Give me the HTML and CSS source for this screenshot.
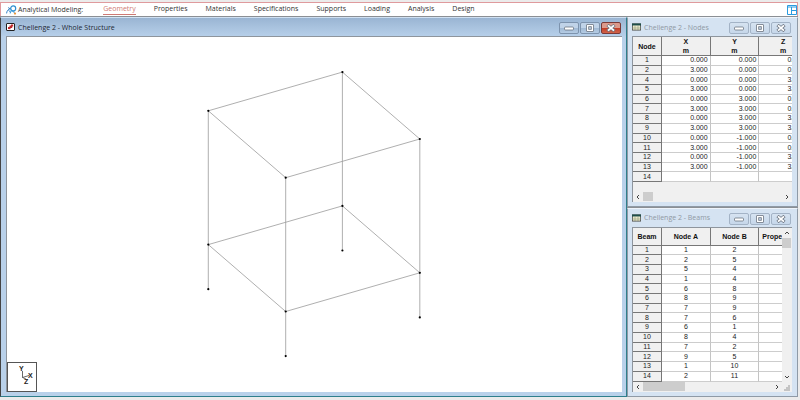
FILE: index.html
```html
<!DOCTYPE html>
<html lang="en">
<head>
    <meta charset="UTF-8">
    <meta name="viewport" content="width=device-width, initial-scale=1.0">
    <title>Analytical Modeling</title>
    <link rel="stylesheet" href="styles.css">
</head>
<body>
    <!-- Shared icons -->
    <svg class="sprite" aria-hidden="true">
        <symbol id="icon-min" viewBox="0 0 10 8">
            <rect x="0.5" y="3" width="9" height="3" rx="1" fill="#fff" stroke="#6b7480" stroke-width="0.8"/>
        </symbol>
        <symbol id="icon-max" viewBox="0 0 10 8">
            <rect x="1.5" y="0.5" width="7" height="7" rx="0.5" fill="#fff" stroke="#6b7480" stroke-width="0.8"/>
            <rect x="3.7" y="2.7" width="2.6" height="2.6" fill="#c3d3e5" stroke="#6b7480" stroke-width="0.8"/>
        </symbol>
        <symbol id="icon-close" viewBox="0 0 10 8">
            <path d="M1.5 1L8.5 7M8.5 1L1.5 7" stroke="#6b7480" stroke-width="3.2"/>
            <path d="M2 1.4L8 6.6M8 1.4L2 6.6" stroke="#fff" stroke-width="1.9"/>
        </symbol>
        <symbol id="icon-table" viewBox="0 0 9 7">
            <rect x="0.4" y="0.4" width="8.2" height="6.2" fill="#fffbe0" stroke="#444" stroke-width="0.8"/>
            <rect x="0" y="0" width="9" height="2" fill="#1f4f4a"/>
            <path d="M3 2V7M6 2V7M0 3.7H9M0 5.3H9" stroke="#7d8a68" stroke-width="0.5"/>
        </symbol>
        <symbol id="icon-left" viewBox="0 0 6 6"><path d="M4 1L2 3L4 5" fill="none" stroke="#444"/></symbol>
        <symbol id="icon-right" viewBox="0 0 6 6"><path d="M2 1L4 3L2 5" fill="none" stroke="#444"/></symbol>
        <symbol id="icon-up" viewBox="0 0 6 6"><path d="M1 4L3 2L5 4" fill="none" stroke="#444"/></symbol>
        <symbol id="icon-down" viewBox="0 0 6 6"><path d="M1 2L3 4L5 2" fill="none" stroke="#444"/></symbol>
    </svg>

    <!-- Ribbon -->
    <header class="ribbon">
        <svg class="ribbon-logo" viewBox="0 0 11 10" aria-hidden="true">
            <path d="M0.6 8.4C0.8 6 2 4.2 4.6 3.6M2.4 5.2L4 6.6M2.2 2.6L4.2 3.8" fill="none" stroke="#2f7fc4" stroke-width="1"/>
            <circle cx="7.2" cy="3.4" r="2.5" fill="none" stroke="#2f8fd0" stroke-width="1.2"/>
            <path d="M4 8.4L5.4 5.2L8.6 7.6" fill="none" stroke="#3a9bdc" stroke-width="1.1"/>
            <circle cx="9" cy="8.6" r="1.1" fill="#e8963c"/>
        </svg>
        <span class="ribbon-title">Analytical Modeling:</span>
        <nav class="ribbon-tabs">
            <a href="#" class="active">Geometry</a>
            <a href="#">Properties</a>
            <a href="#">Materials</a>
            <a href="#">Specifications</a>
            <a href="#">Supports</a>
            <a href="#">Loading</a>
            <a href="#">Analysis</a>
            <a href="#">Design</a>
        </nav>
        <button class="layout-btn" aria-label="Layout">
            <svg viewBox="0 0 10 10"><path d="M0.5 0.5H9.5V9.5H0.5ZM0.5 2H9.5M4.5 2V9.5M4.5 5.5H9.5" fill="none" stroke="#2a9be0"/></svg>
        </button>
    </header>

    <main class="workspace">
        <!-- Whole Structure -->
        <section class="window active-window">
            <div class="title-bar">
                <svg class="app-icon" viewBox="0 0 9 8" aria-hidden="true">
                    <rect x="0.5" y="0.5" width="8" height="7" rx="0.5" fill="#fff" stroke="#222"/>
                    <path d="M2 6V4H3.5V2.5H5V1.5H7.2V3.5H6.2V5H4.5V6.2Z" fill="#c0282c"/>
                </svg>
                <h2>Chellenge 2 - Whole Structure</h2>
                <button aria-label="Minimize"><svg><use href="#icon-min"/></svg></button>
                <button aria-label="Maximize"><svg><use href="#icon-max"/></svg></button>
                <button class="close" aria-label="Close"><svg><use href="#icon-close"/></svg></button>
            </div>
            <div class="client view">
                <svg class="structure" viewBox="0 0 614 355" preserveAspectRatio="xMinYMin meet" aria-hidden="true">
                    <g id="members"></g>
                    <g id="joints"></g>
                </svg>
                <svg class="axes" viewBox="0 0 28 28" aria-hidden="true">
                    <path d="M14.5 8V14.5L21 12.5M14.5 14.5L18 16" fill="none" stroke="#444" stroke-width="0.8"/>
                    <text x="11" y="8">Y</text>
                    <text x="20" y="15">X</text>
                    <text x="16" y="21">Z</text>
                </svg>
            </div>
        </section>

        <!-- Nodes -->
        <section class="window">
            <div class="title-bar">
                <svg class="app-icon" aria-hidden="true"><use href="#icon-table"/></svg>
                <h2>Chellenge 2 - Nodes</h2>
                <button aria-label="Minimize"><svg><use href="#icon-min"/></svg></button>
                <button aria-label="Maximize"><svg><use href="#icon-max"/></svg></button>
                <button aria-label="Close"><svg><use href="#icon-close"/></svg></button>
            </div>
            <div class="client sheet">
                <div class="sheet-body">
                    <table class="nodes">
                        <thead>
                            <tr><th>Node</th><th>X<br>m</th><th>Y<br>m</th><th>Z<br>m</th></tr>
                        </thead>
                        <tbody id="node-rows"></tbody>
                    </table>
                </div>
                <div class="h-scroll">
                    <button aria-label="Scroll left"><svg><use href="#icon-left"/></svg></button>
                    <div class="track"><div class="thumb short"></div></div>
                    <button aria-label="Scroll right"><svg><use href="#icon-right"/></svg></button>
                </div>
            </div>
        </section>

        <!-- Beams -->
        <section class="window">
            <div class="title-bar">
                <svg class="app-icon" aria-hidden="true"><use href="#icon-table"/></svg>
                <h2>Chellenge 2 - Beams</h2>
                <button aria-label="Minimize"><svg><use href="#icon-min"/></svg></button>
                <button aria-label="Maximize"><svg><use href="#icon-max"/></svg></button>
                <button aria-label="Close"><svg><use href="#icon-close"/></svg></button>
            </div>
            <div class="client sheet with-v-scroll">
                <div class="sheet-body">
                    <table class="beams">
                        <thead>
                            <tr><th>Beam</th><th>Node A</th><th>Node B</th><th class="property">Property</th></tr>
                        </thead>
                        <tbody id="beam-rows"></tbody>
                    </table>
                </div>
                <div class="v-scroll">
                    <button aria-label="Scroll up"><svg><use href="#icon-up"/></svg></button>
                    <div class="track"><div class="thumb"></div></div>
                    <button aria-label="Scroll down"><svg><use href="#icon-down"/></svg></button>
                </div>
                <div class="h-scroll">
                    <button aria-label="Scroll left"><svg><use href="#icon-left"/></svg></button>
                    <div class="track"><div class="thumb"></div></div>
                    <button aria-label="Scroll right"><svg><use href="#icon-right"/></svg></button>
                </div>
                <svg class="grip" viewBox="0 0 10 10" aria-hidden="true">
                    <path d="M6 3H8V9H2V7H4V5H6Z" fill="#c4c4c4"/>
                </svg>
            </div>
        </section>
    </main>

    <script src="script.js"></script>
</body>
</html>
```

FILE: styles.css
```css
* {
    box-sizing: border-box;
}
body {
    margin: 0;
    height: 100vh;
    display: flex;
    flex-direction: column;
    padding: 2px 2px 3px 0;
    background-color: #ebebeb;
    font-family: "Liberation Sans", Arial, sans-serif;
    font-size: 7px;
    color: #222;
}
.sprite {
    display: none;
}
button {
    padding: 0;
    border: none;
    background: none;
    display: flex;
    align-items: center;
    justify-content: center;
}

/* Ribbon */
.ribbon {
    display: flex;
    align-items: center;
    height: 14px;
    padding: 0 0 0 5px;
    background-color: #fff;
    border: 1px solid #df9a9d;
    border-bottom: none;
    font-family: "Open Sans", "Noto Sans", sans-serif;
    color: #333;
}
.ribbon-logo {
    width: 11px;
    height: 10px;
    margin-right: 1px;
}
.ribbon-title {
    margin-right: 20px;
}
.ribbon-tabs {
    display: flex;
    gap: 18px;
    flex: 1;
}
.ribbon-tabs a {
    color: #333;
    text-decoration: none;
    line-height: 10px;
    border-bottom: 1px solid transparent;
}
.ribbon-tabs a.active {
    color: #cf7a75;
    border-color: #cf7a75;
}
.layout-btn svg {
    width: 10px;
    height: 10px;
}

/* Windows */
.workspace {
    flex: 1;
    min-height: 0;
    display: grid;
    grid-template-columns: 1fr 171px;
    grid-template-rows: 1fr 1fr;
    row-gap: 1px;
    background-color: #8b8f94;
    padding-top: 1px;
}
.window {
    display: flex;
    flex-direction: column;
    min-width: 0;
    min-height: 0;
    padding: 0 5px 4px 4px;
    background-color: #d5e3f2;
    border: 1px solid #8f9aa6;
    border-top-color: #eef4fb;
}
.active-window {
    grid-row: span 2;
    padding: 0 4px 4px 5px;
    background-color: #b9d1ea;
    border-color: #2f7f8c;
    border-left-color: #444;
    border-top-color: #cfe0f2;
}
.title-bar {
    display: flex;
    align-items: center;
    gap: 1px;
    height: 18px;
    padding-right: 1px;
    flex: none;
}
.active-window .title-bar {
    margin: 0 -4px 0 -5px;
    padding: 0 5px;
    background: linear-gradient(#9ab5d3, #b6cfe9);
}
.title-bar h2 {
    flex: 1;
    margin: 0 0 0 2px;
    font-family: "Open Sans", "Noto Sans", sans-serif;
    font-size: 7px;
    font-weight: normal;
    color: #8f99a4;
    white-space: nowrap;
}
.active-window h2 {
    color: #1d2733;
}
.app-icon {
    width: 9px;
    height: 8px;
}
.title-bar button {
    width: 20px;
    height: 12px;
    margin-top: 2px;
    border: 1px solid #a3b3c6;
    border-radius: 2px;
    background: linear-gradient(#d6e3f1, #c6d7ea);
}
.active-window .title-bar button {
    border-color: #7d93ad;
    background: linear-gradient(#c0d3e8 45%, #9fb8d3 50%, #b5cce4);
}
.active-window .title-bar .close {
    border-color: #7a3a38;
    background: linear-gradient(#dc9a8c 45%, #c23b25 50%, #d0644a);
}
.title-bar button svg {
    width: 10px;
    height: 8px;
}
.client {
    flex: 1;
    min-height: 0;
    border-top: 1px solid #8e959d;
    border-left: 1px solid #8e959d;
    background-color: #fff;
}

/* Structure view */
.view {
    position: relative;
}
.structure {
    display: block;
    width: 100%;
    height: 100%;
}
.structure line {
    stroke: #9a9a9a;
    stroke-width: 0.8;
}
.structure circle {
    fill: #000;
}
.axes {
    position: absolute;
    left: 0;
    bottom: 0;
    width: 30px;
    height: 30px;
    border: 1px solid #555;
    background-color: #fff;
}
.axes text {
    font-size: 7px;
    font-weight: bold;
    fill: #222;
}

/* Tables */
.sheet {
    display: grid;
    grid-template-columns: 1fr;
    grid-template-rows: 1fr 10px;
    background-color: #f0f0f0;
}
.sheet.with-v-scroll {
    grid-template-columns: 1fr 10px;
}
.sheet-body {
    overflow: hidden;
    min-width: 0;
    min-height: 0;
}
table {
    width: 175px;
    table-layout: fixed;
    border-collapse: separate;
    border-spacing: 0;
    background-color: #fff;
    line-height: 8px;
}
.nodes {
    height: 145px;
}
.beams {
    height: 154px;
}
th, td {
    padding: 0 1px;
    border-right: 1px solid #c4c4c4;
    border-bottom: 1px solid #cdcdcd;
    text-align: center;
}
.nodes td {
    padding-right: 2px;
    text-align: right;
}
th {
    background-color: #f0f0f0;
    border-color: #777;
}
thead th {
    height: 18px;
    line-height: 9px;
    color: #111;
}
thead th:first-child {
    width: 29px;
}
thead .property {
    padding-left: 3px;
    text-align: left;
}
tbody th {
    font-weight: normal;
}

/* Scroll bars */
.h-scroll, .v-scroll {
    display: flex;
    background-color: #f0f0f0;
}
.v-scroll {
    flex-direction: column;
}
.h-scroll button {
    width: 10px;
}
.v-scroll button {
    height: 10px;
}
.h-scroll svg, .v-scroll svg {
    width: 6px;
    height: 6px;
}
.track {
    flex: 1;
}
.thumb {
    background-color: #cdcdcd;
}
.h-scroll .thumb {
    width: 42px;
    height: 9px;
}
.h-scroll .short {
    width: 10px;
}
.v-scroll .thumb {
    width: 9px;
    height: 10px;
}
.grip {
    width: 10px;
    height: 10px;
}
```

FILE: script.js
```js
// Node number, X, Y, Z
const nodes = [
    [1, '0.000', '0.000', '0.000'],
    [2, '3.000', '0.000', '0.000'],
    [4, '0.000', '0.000', '3.000'],
    [5, '3.000', '0.000', '3.000'],
    [6, '0.000', '3.000', '0.000'],
    [7, '3.000', '3.000', '0.000'],
    [8, '0.000', '3.000', '3.000'],
    [9, '3.000', '3.000', '3.000'],
    [10, '0.000', '-1.000', '0.000'],
    [11, '3.000', '-1.000', '0.000'],
    [12, '0.000', '-1.000', '3.000'],
    [13, '3.000', '-1.000', '3.000'],
    [14, '', '', '']
];

// Beam number, node A, node B, property
const beams = [
    [1, 1, 2, ''], [2, 2, 5, ''], [3, 5, 4, ''], [4, 1, 4, ''],
    [5, 6, 8, ''], [6, 8, 9, ''], [7, 7, 9, ''], [8, 7, 6, ''],
    [9, 6, 1, ''], [10, 8, 4, ''], [11, 7, 2, ''], [12, 9, 5, ''],
    [13, 1, 10, ''], [14, 2, 11, '']
];

// Beams below the last visible table row
const columns = [[4, 12], [5, 13]];

function fillTable(id, rows) {
    document.getElementById(id).innerHTML = rows.map(([head, ...cells]) =>
        `<tr><th scope="row">${head}</th>${cells.map(c => `<td>${c}</td>`).join('')}</tr>`
    ).join('');
}

// Isometric projection of a node to view coordinates
function project([, x, y, z]) {
    return {
        x: 201.3 + x * 44.7 + z * 25.8,
        y: 207.6 - x * 12.9 - y * 44.6 + z * 22.3
    };
}

function drawStructure() {
    const points = {};
    nodes.filter(n => n[1] !== '').forEach(n => points[n[0]] = project(n));

    const members = beams.map(b => [b[1], b[2]]).concat(columns);
    document.getElementById('members').innerHTML = members.map(([a, b]) =>
        `<line x1="${points[a].x}" y1="${points[a].y}" x2="${points[b].x}" y2="${points[b].y}"/>`
    ).join('');
    document.getElementById('joints').innerHTML = Object.values(points).map(p =>
        `<circle cx="${p.x}" cy="${p.y}" r="1.1"/>`
    ).join('');
}

fillTable('node-rows', nodes);
fillTable('beam-rows', beams);
drawStructure();
```
